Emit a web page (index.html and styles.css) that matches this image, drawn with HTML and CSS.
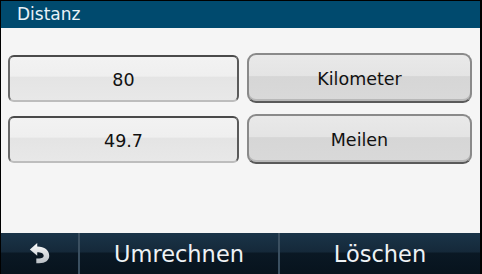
FILE: index.html
```html
<!DOCTYPE html>
<html>
<head>
<meta charset="utf-8">
<link rel="stylesheet" href="styles.css">
</head>
<body>
<div class="screen">
  <div class="header">Distanz</div>
  <div class="content">
    <div class="row">
      <div class="field">80</div>
      <div class="btn">Kilometer</div>
    </div>
    <div class="row">
      <div class="field">49.7</div>
      <div class="btn">Meilen</div>
    </div>
  </div>
  <div class="footer">
    <div class="fbtn back">
      <svg width="24" height="24" viewBox="0 0 26 24">
        <defs>
          <linearGradient id="g" x1="0" y1="0" x2="0" y2="1">
            <stop offset="0" stop-color="#ffffff"/>
            <stop offset="1" stop-color="#b8bec4"/>
          </linearGradient>
        </defs>
        <path d="M2 7 L10 0 L10 4 C18 4 23 8 23 14 C23 19 19 22 12 22 L9 22 L9 17 L12 17 C15 17 17 16 17 14 C17 11 14 10 10 10 L10 14 Z" fill="url(#g)"/>
      </svg>
    </div>
    <div class="fbtn">Umrechnen</div>
    <div class="fbtn">Löschen</div>
  </div>
</div>
</body>
</html>
```
FILE: styles.css
```css
* { box-sizing: border-box; }
html, body { margin: 0; padding: 0; background: #000; }
.screen {
  width: 482px;
  height: 274px;
  padding: 1px 2px 0 1px;
  display: flex;
  flex-direction: column;
  background: #000;
  font-family: "DejaVu Sans", sans-serif;
}
.header {
  height: 27px;
  background: #004a6e;
  color: #e8f2f8;
  font-size: 17px;
  line-height: 27px;
  padding-left: 16px;
  flex: none;
}
.content {
  flex: 1;
  background: #f5f5f5;
  padding: 25px 8px 0 7px;
  display: flex;
  flex-direction: column;
  gap: 12px;
}
.row {
  display: flex;
  gap: 8px;
  height: 49px;
}
.field, .btn {
  display: flex;
  align-items: center;
  justify-content: center;
  font-size: 17.5px;
  color: #111;
  padding-top: 2px;
}
.field {
  width: 231px;
  margin-top: 2px;
  height: 47px;
  border-radius: 6px;
  border: 2px solid #4a4a4a;
  border-right-color: #5a5a5a;
  border-bottom: 2px solid #bdbdbd;
  border-left-color: #6a6a6a;
  background: linear-gradient(#f2f2f2 0%, #efefef 45%, #e4e4e4 46%, #e8e8e8 100%);
}
.btn {
  flex: 1;
  height: 50px;
  border-radius: 9px;
  border: 2px solid #8a8a8a;
  border-bottom-color: #5a5a5a;
  background: linear-gradient(#e9e9e9 0%, #e4e4e4 45%, #d6d6d6 47%, #d9d9d9 100%);
  box-shadow: inset 0 -2px 0 #b8b8b8;
}
.footer {
  height: 41px;
  flex: none;
  display: flex;
  background: linear-gradient(#1a3448 0%, #15293a 45%, #0a1824 50%, #07131d 100%);
}
.fbtn {
  display: flex;
  align-items: center;
  justify-content: center;
  color: #eef2f5;
  font-size: 22.5px;
  border-right: 2px solid #3a4f60;
  width: 200px;
}
.fbtn.back { width: 79px; }
.fbtn:last-child { border-right: none; flex: 1; }
```
